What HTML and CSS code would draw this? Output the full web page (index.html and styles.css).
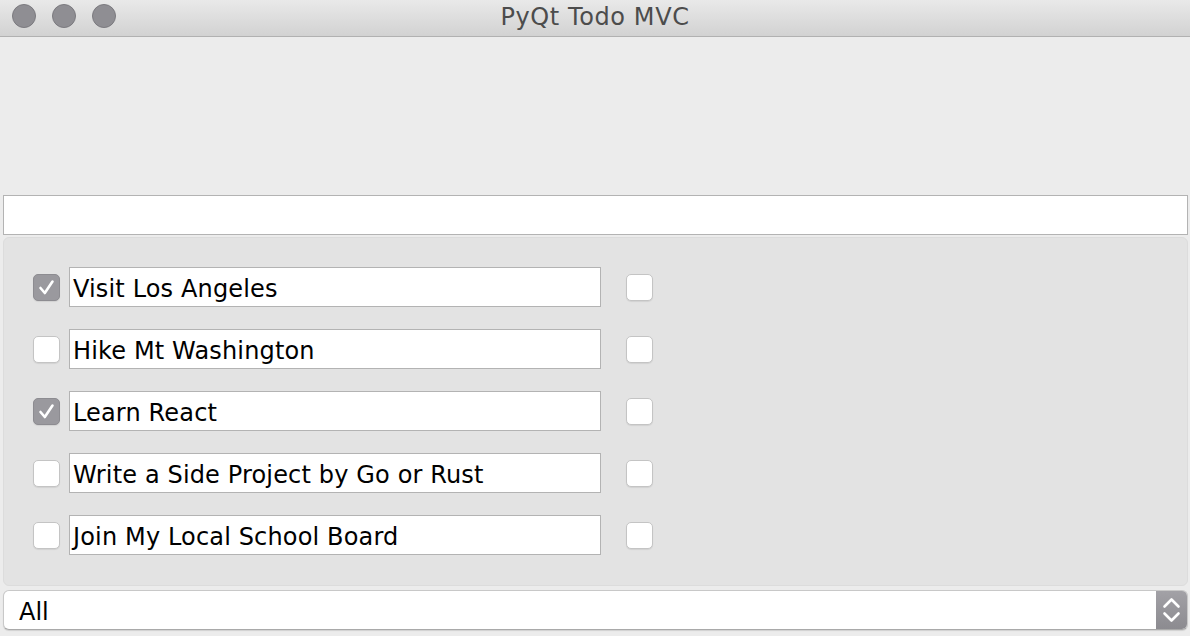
FILE: index.html
```html
<!DOCTYPE html>
<html>
<head>
<meta charset="utf-8">
<link rel="stylesheet" href="styles.css">
</head>
<body>
<div class="window">
  <div class="titlebar">
    <div class="lights">
      <span class="light"></span><span class="light"></span><span class="light"></span>
    </div>
    <div class="title">PyQt Todo MVC</div>
  </div>
  <div class="content">
    <div class="spacer"></div>
    <div class="newtodo"></div>
    <div class="group">
      <div class="row">
        <span class="cb checked"><svg viewBox="0 0 27 27" width="27" height="27"><path d="M7.5 14 L11.8 19 L19.5 7.5" fill="none" stroke="#fff" stroke-width="2.6" stroke-linecap="round" stroke-linejoin="round"/></svg></span>
        <div class="field">Visit Los Angeles</div>
        <span class="cb del"></span>
      </div>
      <div class="row">
        <span class="cb"></span>
        <div class="field">Hike Mt Washington</div>
        <span class="cb del"></span>
      </div>
      <div class="row">
        <span class="cb checked"><svg viewBox="0 0 27 27" width="27" height="27"><path d="M7.5 14 L11.8 19 L19.5 7.5" fill="none" stroke="#fff" stroke-width="2.6" stroke-linecap="round" stroke-linejoin="round"/></svg></span>
        <div class="field">Learn React</div>
        <span class="cb del"></span>
      </div>
      <div class="row">
        <span class="cb"></span>
        <div class="field">Write a Side Project by Go or Rust</div>
        <span class="cb del"></span>
      </div>
      <div class="row">
        <span class="cb"></span>
        <div class="field">Join My Local School Board</div>
        <span class="cb del"></span>
      </div>
    </div>
    <div class="combo">
      <div class="combo-text">All</div>
      <div class="stepper">
        <svg viewBox="0 0 31 40" width="31" height="40"><path d="M8.5 16.5 L15.5 9.5 L22.5 16.5" fill="none" stroke="#fff" stroke-width="2.6" stroke-linecap="round" stroke-linejoin="round"/><path d="M8.5 23.5 L15.5 30.5 L22.5 23.5" fill="none" stroke="#fff" stroke-width="2.6" stroke-linecap="round" stroke-linejoin="round"/></svg>
      </div>
    </div>
  </div>
</div>
</body>
</html>
```

FILE: styles.css
```css
html, body {
  margin: 0;
  padding: 0;
  width: 1190px;
  height: 636px;
  overflow: hidden;
  background: #ececec;
  font-family: "DejaVu Sans", "Liberation Sans", sans-serif;
}
.window {
  display: flex;
  flex-direction: column;
  height: 636px;
}
.titlebar {
  height: 36px;
  border-bottom: 1px solid #b1b1b1;
  background: linear-gradient(#e9e9e9, #d2d2d2);
  display: flex;
  align-items: center;
  position: relative;
}
.lights {
  display: flex;
  gap: 16px;
  padding-left: 12px;
  padding-bottom: 4px;
}
.light {
  width: 22px;
  height: 22px;
  border-radius: 50%;
  background: #8f8e93;
  border: 1px solid #7b7a7f;
}
.title {
  position: absolute;
  left: 0;
  right: 0;
  top: 3px;
  text-align: center;
  font-size: 24px;
  letter-spacing: 0.6px;
  color: #4c4c4c;
}
.content {
  display: flex;
  flex-direction: column;
  padding: 0 2px 0 3px;
}
.spacer {
  height: 158px;
}
.newtodo {
  height: 38px;
  background: #fff;
  border: 1px solid #b3b3b3;
}
.group {
  margin-top: 2px;
  background: #e3e3e3;
  border: 1px solid #dcdcdc;
  border-radius: 6px;
  padding: 29px 0 30px 29px;
  display: flex;
  flex-direction: column;
  gap: 22px;
}
.row {
  display: flex;
  align-items: center;
  height: 40px;
}
.cb {
  width: 27px;
  height: 27px;
  box-sizing: border-box;
  border-radius: 5px;
  background: #fff;
  border: 1px solid #c4c4c4;
  box-shadow: 0 1px 1px rgba(0,0,0,0.08);
  display: flex;
}
.cb.checked {
  background: #9a999e;
  border-color: #8d8c91;
}
.cb.checked svg {
  margin: -1px;
}
.field {
  margin-left: 9px;
  height: 36px;
  padding-top: 2px;
  background: #fff;
  border: 1px solid #b3b3b3;
  font-size: 24px;
  letter-spacing: 0.15px;
  line-height: 38px;
  padding-left: 3px;
  box-sizing: content-box;
  color: #000;
  width: 527px;
  overflow: hidden;
}
.cb.del {
  margin-left: 25px;
}
.combo {
  margin-top: 4px;
  height: 38px;
  background: #fff;
  border: 1px solid #c8c8c8;
  border-bottom-color: #a9a9a9;
  border-radius: 6px;
  display: flex;
  overflow: hidden;
  box-shadow: 0 1px 1px rgba(0,0,0,0.12);
}
.combo-text {
  flex: 1;
  font-size: 24px;
  line-height: 38px;
  padding-top: 2px;
  padding-left: 15px;
  color: #000;
}
.stepper {
  width: 31px;
  background: linear-gradient(#a2a1a6, #8c8b90);
  display: flex;
  align-items: center;
  justify-content: center;
}
.stepper svg {
  display: block;
}
```
